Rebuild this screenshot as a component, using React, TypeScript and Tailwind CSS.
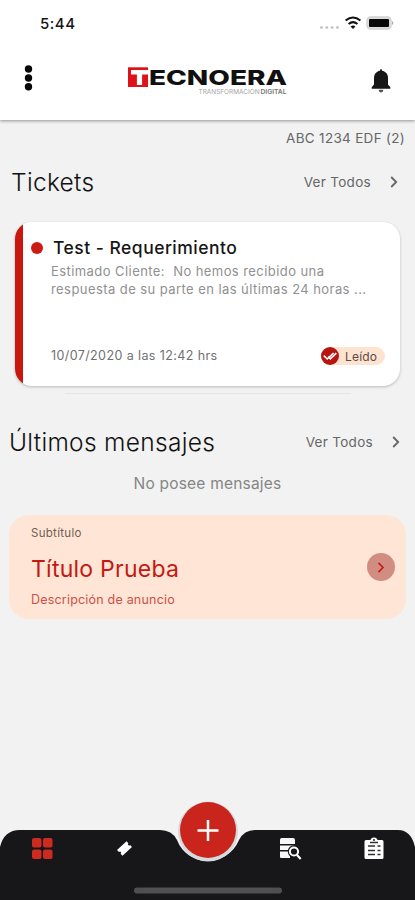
import React from "react";

function Chevron({ className }: { className: string }) {
  return (
    <svg viewBox="0 0 8 12" className={className} fill="none" stroke="currentColor" strokeWidth="1.8">
      <path d="M1.2 1 6.2 6 1.2 11" />
    </svg>
  );
}

function StatusBar() {
  return (
    <div className="flex h-[46px] items-center justify-between pl-10 pr-[21px]">
      <span className="text-[15px] font-medium leading-none tracking-[0.5px] text-[#151515]">5:44</span>
      <svg width="76" height="16" viewBox="0 0 76 16">
        <g fill="#c4c4c4">
          <rect x="2" y="11.2" width="3" height="2.6" rx="1" />
          <rect x="7.3" y="11.2" width="3" height="2.6" rx="1" />
          <rect x="12.6" y="11.2" width="3" height="2.6" rx="1" />
          <rect x="17.9" y="11.2" width="3" height="2.6" rx="1" />
        </g>
        <g fill="none" stroke="#111" strokeWidth="2">
          <path d="M27.6 5.6Q35 -.6 42.4 5.6" />
          <path d="M30.6 8.9Q35 5.3 39.4 8.9" />
        </g>
        <path d="M32.6 11.4Q35 9.6 37.4 11.4L35 13.9Z" fill="#111" />
        <rect x="49" y="2" width="24" height="12" rx="3.6" fill="#dedede" stroke="#d2d2d2" strokeWidth="1.4" />
        <rect x="51" y="4" width="20" height="8" rx="1" fill="#080808" />
        <path d="M74.2 6Q76.4 8 74.2 10Z" fill="#9a9a9a" />
      </svg>
    </div>
  );
}

function Logo() {
  return (
    <svg width="162" height="34" viewBox="0 0 162 34">
      <rect x="2" y="4.3" width="20" height="19.7" fill="#df1119" />
      <path d="M5 7H22V11.6H16.1V22H10.9V11.6H5Z" fill="#fff" />
      <text
        x="23"
        y="22"
        fontFamily="Inter, sans-serif"
        fontWeight="800"
        fontSize="20.5"
        fill="#101010"
        textLength="138"
        lengthAdjust="spacingAndGlyphs"
      >
        ECNOERA
      </text>
      <text x="72.5" y="31" fontFamily="Inter, sans-serif" fontSize="6.6" fill="#a5a5a5" textLength="61" lengthAdjust="spacingAndGlyphs">
        TRANSFORMACIÓN
      </text>
      <text x="134.5" y="31" fontFamily="Inter, sans-serif" fontWeight="600" fontSize="6.6" fill="#747474" textLength="26" lengthAdjust="spacingAndGlyphs">
        DIGITAL
      </text>
    </svg>
  );
}

function Header() {
  return (
    <header className="relative h-[120px] bg-white shadow-[0_1px_3px_rgba(0,0,0,0.4)]">
      <StatusBar />
      <div className="flex items-start justify-between pl-6 pr-6">
        <svg width="9" height="28" viewBox="0 0 9 28" className="mt-[18px]" fill="#080808">
          <circle cx="4.5" cy="5" r="3.7" />
          <circle cx="4.5" cy="14" r="3.7" />
          <circle cx="4.5" cy="22.7" r="3.7" />
        </svg>
        <div className="mt-[17px] ml-[9px]">
          <Logo />
        </div>
        <svg width="20" height="25" viewBox="0 0 20 25" className="mt-[22px]" fill="#161616">
          <path d="M9 2.8Q9 1 10 1T11 2.8C15 3.5 17 6.3 17 10.3V16.5L19.3 19.3V20.7H.7V19.3L3 16.5V10.3C3 6.3 5 3.5 9 2.8Z" />
          <path d="M7.5 21.7H12.5Q12 24.4 10 24.4T7.5 21.7Z" fill="#555" />
        </svg>
      </div>
    </header>
  );
}

function TicketCard() {
  return (
    <article className="mx-[15px] flex h-[164px] overflow-hidden rounded-[17px] bg-white shadow-[0_1px_3px_rgba(0,0,0,0.24)]">
      <div className="w-2 shrink-0 bg-[#c8170f]" />
      <div className="flex min-w-0 flex-1 flex-col pl-[8px] pr-[15px]">
        <div className="flex h-[26px] items-end gap-[10px]">
          <span className="mb-[-6px] size-3 rounded-full bg-[#cc1b15]" />
          <h3 className="mb-[-12px] whitespace-nowrap text-[17.5px] font-medium leading-6 tracking-[0.48px] text-[#161616]">Test - Requerimiento</h3>
        </div>
        <p className="ml-[20px] mt-[15px] whitespace-pre text-[13px] leading-[17.5px] tracking-[0.43px] text-[#909090]">
          <span className="block">{"Estimado Cliente:  No hemos recibido una"}</span>
          <span className="block">respuesta de su parte en las últimas 24 horas ...</span>
        </p>
        <div className="ml-[20px] mt-[49px] flex h-[18px] items-center justify-between">
          <span className="text-[12.5px] leading-[18px] tracking-[0.4px] text-[#707070]">10/07/2020 a las 12:42 hrs</span>
          <span className="flex h-[18px] w-[64px] items-center rounded-full bg-[#ffe3d1]">
            <svg width="18" height="18" viewBox="0 0 18 18" className="shrink-0">
              <circle cx="9" cy="9" r="9" fill="#b91510" />
              <path d="m2.8 8.6 3.4 3.4 6.4-6M7.2 9.6l2.1 2.2 6-5.7" fill="none" stroke="#fff" strokeWidth="1.6" />
            </svg>
            <span className="ml-[6px] pt-px text-[12px] leading-none tracking-[0.2px] text-[#594b45]">Leído</span>
          </span>
        </div>
      </div>
    </article>
  );
}

function SectionHeading({ title }: { title: string }) {
  return (
    <div className="flex h-8 items-center justify-between">
      <h2 className="text-[24.5px] font-light leading-8 tracking-[0.3px] text-[#111]">{title}</h2>
      <a className="flex items-center gap-[19px] text-[13.5px] tracking-[0.3px] text-[#666]">
        Ver Todos
        <Chevron className="h-3 w-2" />
      </a>
    </div>
  );
}

function Announcement() {
  return (
    <article className="mx-[9px] mt-[21px] flex h-[104px] items-center justify-between rounded-[20px] bg-[#ffe5d5] pl-[22px] pr-[11px]">
      <div className="flex h-full flex-col whitespace-nowrap">
        <span className="mt-[10px] text-[11.5px] leading-4 tracking-[0.3px] text-[#715d54]">Subtítulo</span>
        <h3 className="mt-[13px] text-[23px] leading-[30px] tracking-[0.25px] text-[#c31912]">Título Prueba</h3>
        <span className="mt-[8px] text-[12.5px] leading-4 tracking-[0.2px] text-[#cb514a]">Descripción de anuncio</span>
      </div>
      <span className="flex size-7 items-center justify-center rounded-full bg-[#d28d82] text-[#c51b15]">
        <Chevron className="h-[11px] w-2" />
      </span>
    </article>
  );
}

function BottomNav() {
  return (
    <nav className="relative h-[99px]">
      <svg className="absolute inset-0" width="415" height="99" viewBox="0 0 415 99">
        <path d="M0 99V46Q4 29 20 29H160Q172 29 177 39C188 67 227 67 239 39Q244 29 255 29H398Q411 29 415 46V99Z" fill="#171719" />
        <circle cx="208" cy="30.5" r="30" fill="#d5dadd" />
        <circle cx="208" cy="29" r="28" fill="#c9251d" />
        <path d="M197.5 29.5H218.5M208 19V40" stroke="#fff" strokeWidth="2.5" />
        <g fill="#cb2b20">
          <rect x="32" y="37" width="9.5" height="9.5" rx="2" />
          <rect x="43" y="37" width="9.5" height="9.5" rx="2" />
          <rect x="32" y="48.5" width="9.5" height="9.5" rx="2" />
          <rect x="43" y="48.5" width="9.5" height="9.5" rx="2" />
        </g>
        <g transform="translate(124.5 47.5) rotate(-43)">
          <path d="M-6.5-4H6.5V-1.2Q5-1.2 5 0T6.5 1.2V4H-6.5V1.2Q-5 1.2-5 0T-6.5-1.2Z" fill="#fff" />
        </g>
        <g fill="#f7f7f7">
          <path d="M281.5 37H293Q295 37 295 39V43H280V39Q280 37 281.5 37ZM280 44.5H294V49H280ZM280 50.5H290V57H281Q280 57 280 56Z" />
        </g>
        <circle cx="294" cy="50.5" r="4.2" fill="#171719" stroke="#171719" strokeWidth="4" />
        <circle cx="294" cy="50.5" r="4.1" fill="#171719" stroke="#fff" strokeWidth="2" />
        <path d="m297 54 3.7 4" stroke="#fff" strokeWidth="2.2" />
        <path d="M366 39H370.5Q371 36.5 374 36.5T377.5 39H382Q383.5 39 383.5 40.5V56.5Q383.5 58 382 58H366Q364.5 58 364.5 56.5V40.5Q364.5 39 366 39Z" fill="#fff" />
        <path d="M370 41.5H378M368 45H375M377.5 45H380.5M368 49.5H375M377.5 49.5H380.5M368 53.5H375M377.5 53.5H380.5" stroke="#303030" strokeWidth="1.3" />
        <circle cx="374" cy="39" r="1" fill="#222" />
        <rect x="134" y="86.5" width="148" height="6" rx="3" fill="#505050" />
      </svg>
    </nav>
  );
}

export default function App() {
  return (
    <div className="flex h-[900px] w-full max-w-[415px] flex-col overflow-hidden bg-[#f2f2f2] font-[Inter,sans-serif]">
      <Header />
      <main className="flex-1">
        <div className="flex h-[45px] items-start justify-end pr-[10px] pt-[8px] text-[13.5px] leading-5 tracking-[0.3px] text-[#666]">ABC 1234 EDF (2)</div>
        <div className="pl-[11px] pr-[17px] pt-px">
          <SectionHeading title="Tickets" />
        </div>
        <div className="h-6" />
        <TicketCard />
        <div className="mx-auto mt-[7px] mb-8 h-px w-[286px] bg-[#e5e5e5]" />
        <div className="pl-[9px] pr-[15px]">
          <SectionHeading title="Últimos mensajes" />
        </div>
        <p className="mt-4 h-5 text-center text-[15.5px] leading-5 tracking-[0.2px] text-[#858585]">No posee mensajes</p>
        <Announcement />
      </main>
      <BottomNav />
      <div className="h-0 bg-[#171719]" />
    </div>
  );
}
